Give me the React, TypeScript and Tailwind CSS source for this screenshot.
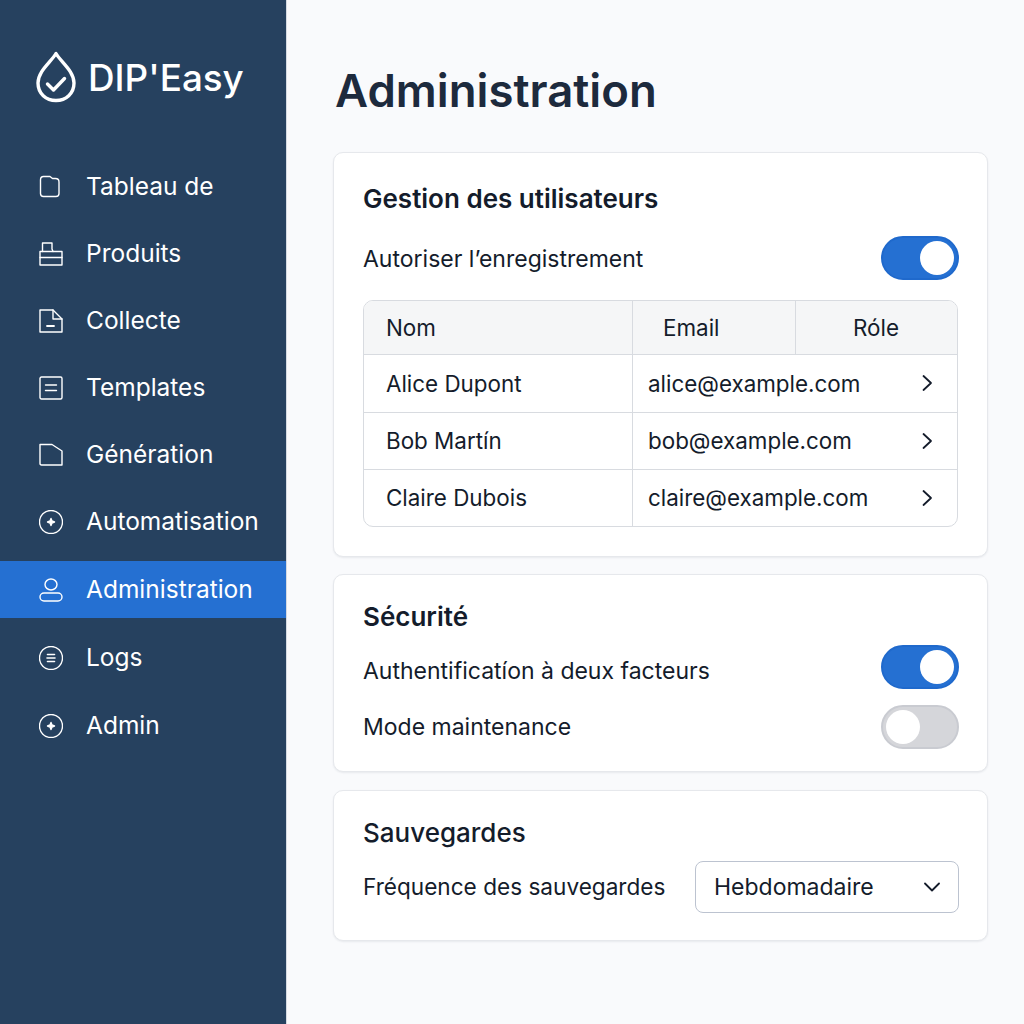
import React from "react";

function Logo() {
  return (
    <svg width="40" height="52" viewBox="0 0 40 52" fill="none" stroke="white" strokeWidth="3.4" strokeLinecap="round" strokeLinejoin="round">
      <path d="M20 2.5C15 11 2 20 2 32C2 42.5 10 49.5 20 49.5C30 49.5 38 42.5 38 32C38 20 25 11 20 2.5Z" />
      <path d="M11.5 33L17.5 39L28.5 27.5" />
    </svg>
  );
}

const iconProps = {
  width: 24,
  height: 24,
  viewBox: "0 0 24 24",
  fill: "none",
  stroke: "white",
  strokeWidth: 1.4,
  strokeLinecap: "round" as const,
  strokeLinejoin: "round" as const,
};

function NavIcon({ name }: { name: string }) {
  switch (name) {
    case "board":
      return (
        <svg {...iconProps}>
          <path d="M1.5 5C1.5 3 2.5 1.5 4.5 1.5H11L13.5 3.5H16.5C19 3.5 20 5 20 7V18.5C20 20.5 19 21.5 17 21.5H4.5C2.5 21.5 1.5 20.5 1.5 18.5Z" />
        </svg>
      );
    case "box":
      return (
        <svg {...iconProps}>
          <path d="M1 23V9.5H3.5V1H13V7L14 9.5H23V23Z" />
          <path d="M1 15.5H23" />
          <path d="M3.5 9.5H14" />
        </svg>
      );
    case "doc":
      return (
        <svg {...iconProps}>
          <path d="M1 1H14L23 10V23H1Z" />
          <path d="M14 1V10H23" />
          <path d="M8 17H15" strokeWidth="1.8" />
        </svg>
      );
    case "list":
      return (
        <svg {...iconProps}>
          <rect x="1" y="1" width="22" height="22" rx="1.5" />
          <path d="M6.5 9H17.5M6.5 14.5H17.5" />
        </svg>
      );
    case "folder":
      return (
        <svg {...iconProps}>
          <path d="M1 1.5H13L23 8V22H2.5C1.5 22 1 21.5 1 20.5Z" />
        </svg>
      );
    case "star":
      return (
        <svg {...iconProps}>
          <circle cx="12" cy="12" r="11.5" />
          <path d="M12 8.5L13 11L15.5 12L13 13L12 15.5L11 13L8.5 12L11 11Z" fill="white" />
        </svg>
      );
    case "user":
      return (
        <svg {...iconProps}>
          <ellipse cx="12" cy="6.5" rx="6" ry="5.5" />
          <rect x="1" y="15" width="22" height="8" rx="4" />
        </svg>
      );
    default:
      return (
        <svg {...iconProps}>
          <circle cx="12" cy="12" r="11.5" />
          <path d="M8.5 8.5H15.5M8 12H16M8.5 15.5H15.5" strokeWidth="1.6" />
        </svg>
      );
  }
}

function Chevron({ down }: { down?: boolean }) {
  return (
    <svg width="16" height="18" viewBox="0 0 16 18" fill="none" stroke="#141c2b" strokeWidth="1.8" strokeLinecap="round" strokeLinejoin="round">
      {down ? <path d="M1 5.5L8 12.5L15 5.5" /> : <path d="M3.5 2L11 9L3.5 16" />}
    </svg>
  );
}

const navItems = [
  { label: "Tableau de", icon: "board" },
  { label: "Produits", icon: "box" },
  { label: "Collecte", icon: "doc" },
  { label: "Templates", icon: "list" },
  { label: "Génération", icon: "folder" },
  { label: "Automatisation", icon: "star" },
  { label: "Administration", icon: "user", active: true },
  { label: "Logs", icon: "logs", late: true },
  { label: "Admin", icon: "star", late: true },
];

const users = [
  { name: "Alice Dupont", email: "alice@example.com" },
  { name: "Bob Martín", email: "bob@example.com" },
  { name: "Claire Dubois", email: "claire@example.com" },
];

function Toggle({ on }: { on: boolean }) {
  return (
    <div
      className={`flex h-[44px] w-[78px] items-center rounded-full border-2 ${
        on ? "justify-end border-[#1f69cc] bg-[#2570d2] pr-[3px]" : "justify-start border-[#c9cbd1] bg-[#d5d6da] pl-[3px]"
      }`}
    >
      <div className="h-[34px] w-[34px] rounded-full bg-white" />
    </div>
  );
}

function Card({ className, children }: { className: string; children: React.ReactNode }) {
  return (
    <section className={`rounded-[10px] border border-[#e6e8ec] bg-white pl-[29px] pr-[28px] shadow-[0_1px_2px_rgba(30,40,70,0.08)] ${className}`}>
      {children}
    </section>
  );
}

export default function App() {
  return (
    <div className="flex h-[1024px] w-[1024px] overflow-hidden bg-[#f9fafc] font-['Inter',sans-serif] text-[#141c2b]">
      <aside className="w-[287px] shrink-0 border-r border-[#d5dae2] bg-[#26415f] text-white">
        <div className="flex h-[158px] items-start pl-[36px] pt-[51px]">
          <Logo />
          <span className="ml-[12px] mt-[4px] text-[36.8px] font-medium leading-[46px]">DIP'Easy</span>
        </div>
        <nav className="flex flex-col gap-[10px]">
          {navItems.map((item) => (
            <div
              key={item.label}
              className={`flex h-[57px] items-center pl-[39px] text-[24.5px] ${item.active ? "mt-[1px] bg-[#2570d2]" : ""} ${item.late ? "mt-[1px]" : ""}`}
            >
              <NavIcon name={item.icon} />
              <span className="ml-[23px]">{item.label}</span>
            </div>
          ))}
        </nav>
      </aside>

      <main className="flex-1 pl-[46px] pr-[36px]">
        <h1 className="ml-[2px] pt-[63px] text-[45.5px] font-semibold leading-[56px] text-[#1d2a3d]">Administration</h1>

        <Card className="mt-[33px] h-[405px] pt-[28px]">
          <h2 className="text-[26px] font-semibold leading-[36px]">Gestion des utilisateurs</h2>
          <div className="mt-[19px] flex items-center justify-between">
            <span className="mt-[2px] text-[23px]">Autoriser l’enregistrement</span>
            <Toggle on />
          </div>
          <div className="mr-[1px] mt-[20px] overflow-hidden rounded-[10px] border border-[#d8dbe0] text-[22.4px]">
            <div className="flex h-[54px] items-center border-b border-[#d8dbe0] bg-[#f5f6f7]">
              <div className="flex h-full w-[269px] items-center border-r border-[#d8dbe0] pl-[22px]">Nom</div>
              <div className="flex h-full w-[163px] items-center border-r border-[#d8dbe0] pl-[30px]">Email</div>
              <div className="flex-1 pl-[57px]">Róle</div>
            </div>
            {users.map((user, i) => (
              <div key={user.email} className={`flex h-[57px] items-center ${i > 0 ? "border-t border-[#d8dbe0]" : ""}`}>
                <div className="flex h-full w-[269px] items-center border-r border-[#d8dbe0] pl-[22px]">{user.name}</div>
                <div className="flex flex-1 items-center justify-between pl-[15px] pr-[21px]">
                  <span>{user.email}</span>
                  <Chevron />
                </div>
              </div>
            ))}
          </div>
        </Card>

        <Card className="mt-[17px] h-[198px] pt-[24px]">
          <h2 className="text-[26px] font-semibold leading-[36px]">Sécurité</h2>
          <div className="mt-[10px] flex items-center justify-between">
            <span className="mt-[8px] text-[23px]">Authentificatíon à deux facteurs</span>
            <Toggle on />
          </div>
          <div className="mt-[16px] flex items-center justify-between">
            <span className="text-[23px]">Mode maintenance</span>
            <Toggle on={false} />
          </div>
        </Card>

        <Card className="mt-[18px] h-[151px] pt-[24px]">
          <h2 className="text-[26px] font-medium leading-[36px]">Sauvegardes</h2>
          <div className="mt-[10px] flex items-center justify-between">
            <span className="text-[22.6px]">Fréquence des sauvegardes</span>
            <div className="flex h-[52px] w-[264px] items-center justify-between rounded-[8px] border border-[#bcc3d0] pl-[18px] pr-[18px] text-[23px]">
              Hebdomadaire
              <Chevron down />
            </div>
          </div>
        </Card>
      </main>
    </div>
  );
}
